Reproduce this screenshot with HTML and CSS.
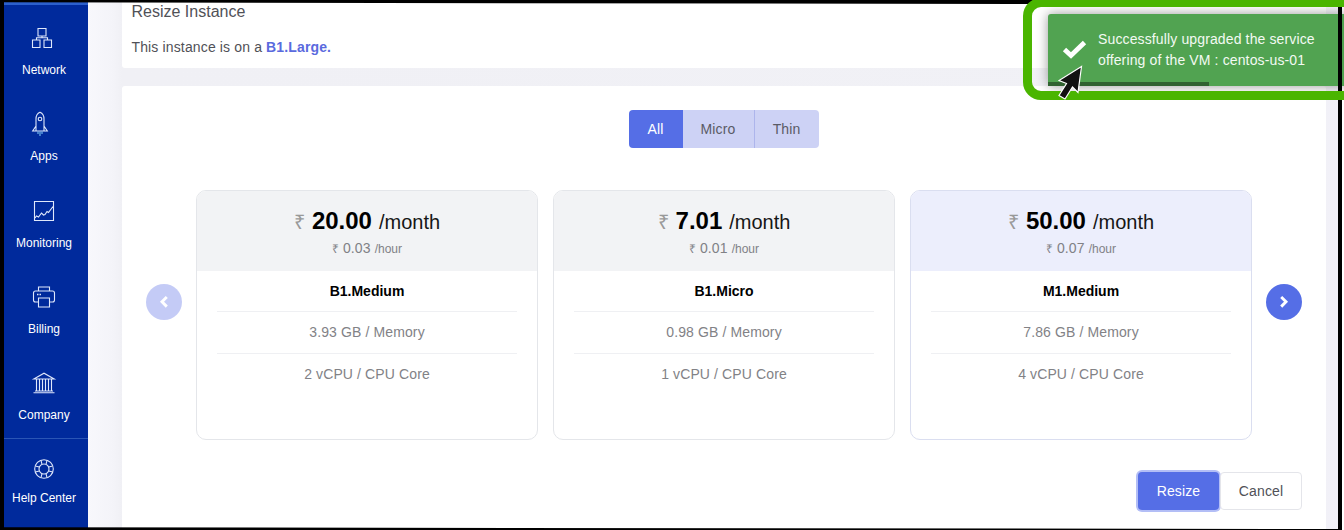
FILE: index.html
```html
<!DOCTYPE html>
<html lang="en">
<head>
<meta charset="utf-8">
<title>Resize Instance</title>
<link rel="stylesheet" href="styles.css">
</head>
<body>
<div class="app">
  <nav class="sidebar">
    <a class="nav-item">
      <svg class="icon icon-network" width="20" height="20" viewBox="0 0 20 20"><path d="M6 .5h8v7.500H6zM.5 12h7.500v7.500H.5zM12 12h7.500v7.500H12zM10 8v1.700M4.500 12V9.700h11V12"/></svg>
      <span>Network</span>
    </a>
    <a class="nav-item">
      <svg class="icon icon-rocket" width="16" height="25" viewBox="0 0 16 25"><path d="M4 19.500V7.500C4 4 6 1.500 8 .7c2 .8 4 3.300 4 6.800v12zM4 14.500L.7 19.500H4M12 14.500l3.300 5H12"/><circle cx="8" cy="7.500" r="1.800"/><path d="M6 20v2.500M8 20v4.500M10 20v2.500" stroke="#79c2f2"/></svg>
      <span>Apps</span>
    </a>
    <a class="nav-item">
      <svg class="icon" width="20" height="20" viewBox="0 0 20 20"><path d="M.5 .5h19v19H.5zM1 17l1.500-2 2 1 3-4 2 2 1.500-.5 2-3 1.500 1L19 5.500"/></svg>
      <span>Monitoring</span>
    </a>
    <a class="nav-item">
      <svg class="icon" width="22" height="21" viewBox="0 0 22 21"><path d="M5.500 4.500v-4h11v4M5.500 15.500h-3c-1.200 0-2-.8-2-2v-7c0-1.200.8-2 2-2h17c1.200 0 2 .8 2 2v7c0 1.200-.8 2-2 2h-3M5.500 11.500h11v9h-11z"/><path d="M4 8h1.500M6.500 8H8" stroke-width="1.500"/></svg>
      <span>Billing</span>
    </a>
    <a class="nav-item">
      <svg class="icon" width="22" height="21" viewBox="0 0 22 21"><path d="M.8 6.500L11 .7l10.200 5.800zM3.500 7v11.500M6.500 7v11.500M9.500 7v11.500M12.500 7v11.500M15.500 7v11.500M18.500 7v11.500M2 18.500h18M.5 20.300h21"/></svg>
      <span>Company</span>
    </a>
    <a class="nav-item nav-help">
      <svg class="icon" width="20" height="20" viewBox="0 0 20 20"><circle cx="10" cy="10" r="9.300"/><circle cx="10" cy="10" r="5"/><path d="M7 1.300l1 4M13 1.300l-1 4M7 18.700l1-4M13 18.700l-1-4M1.300 7l4 1M1.300 13l4-1M18.700 7l-4 1M18.700 13l-4-1"/></svg>
      <span>Help Center</span>
    </a>
  </nav>

  <main class="content">
    <section class="panel intro">
      <h1 class="title">Resize Instance</h1>
      <p class="current">This instance is on a <b>B1.Large.</b></p>
    </section>

    <section class="panel plans">
      <div class="tabs">
        <button class="tab tab-active">All</button>
        <button class="tab tab-micro">Micro</button>
        <button class="tab tab-thin">Thin</button>
      </div>

      <div class="carousel">
        <button class="arrow arrow-off" aria-label="Previous"><svg width="10" height="13" viewBox="0 0 10 13"><path d="M7.800 1L3 5.800 7.800 10.600"/></svg></button>
        <article class="card">
          <header class="card-head">
            <div class="month"><span class="cur">₹</span><b>20.00</b><span>/month</span></div>
            <div class="hour"><span class="cur-s">₹</span><span>0.03</span><small>/hour</small></div>
          </header>
          <ul class="specs"><li class="name">B1.Medium</li><li>3.93 GB / Memory</li><li>2 vCPU / CPU Core</li></ul>
        </article>
        <article class="card">
          <header class="card-head">
            <div class="month"><span class="cur">₹</span><b>7.01</b><span>/month</span></div>
            <div class="hour"><span class="cur-s">₹</span><span>0.01</span><small>/hour</small></div>
          </header>
          <ul class="specs"><li class="name">B1.Micro</li><li>0.98 GB / Memory</li><li>1 vCPU / CPU Core</li></ul>
        </article>
        <article class="card card-selected">
          <header class="card-head">
            <div class="month"><span class="cur">₹</span><b>50.00</b><span>/month</span></div>
            <div class="hour"><span class="cur-s">₹</span><span>0.07</span><small>/hour</small></div>
          </header>
          <ul class="specs"><li class="name">M1.Medium</li><li>7.86 GB / Memory</li><li>4 vCPU / CPU Core</li></ul>
        </article>
        <button class="arrow" aria-label="Next"><svg width="10" height="13" viewBox="0 0 10 13"><path d="M2.200 1L7 5.800 2.200 10.600"/></svg></button>
      </div>

      <div class="actions">
        <button class="btn btn-primary">Resize</button>
        <button class="btn btn-plain">Cancel</button>
      </div>
    </section>
  </main>

  <div class="toast">
    <svg class="check" width="25" height="20" viewBox="0 0 25 20"><path d="M2.500 9.500l6.500 6L22.500 2.500"/></svg>
    <p class="toast-text">Successfully upgraded the service<br>offering of the VM : centos-us-01</p>
    <div class="progress"></div>
  </div>

  <svg class="frame" width="1344" height="530" viewBox="0 0 1344 530">
    <path d="M0 0H1342V530H0zM4 2.300V527.200L1338 529V4.500z" fill-rule="evenodd"/>
  </svg>
  <div class="highlight"></div>
  <svg class="cursor" width="26" height="36" viewBox="0 0 26 36"><path d="M23.500 1.500L1 15.500l7.500 3-7.500 12 6 3.500 7.500-12 5.500 5.500z"/></svg>
</div>
</body>
</html>
```
FILE: styles.css
```css
* { box-sizing: border-box; }
body {
  margin: 0;
  overflow: hidden;
  background: #fff;
  color: #505157;
  font: 14px/20px "Liberation Sans", Arial, sans-serif;
  letter-spacing: .12px;
}
button { font: inherit; letter-spacing: inherit; border: 0; padding: 0; margin: 0; }
p, h1, ul { margin: 0; padding: 0; }

.app {
  position: relative;
  display: flex;
  width: 1344px;
  height: 530px;
  padding: 0 6px 0 4px;
  overflow: hidden;
}

.sidebar {
  width: 84px;
  flex: none;
  background: #002a9c;
  border-top: 5px solid #2c60cc;
  display: flex;
  flex-direction: column;
}
.nav-item {
  display: flex;
  flex-direction: column;
  align-items: center;
  height: 86.3px;
  flex: none;
  padding: 20px 4px 0 0;
  color: #fff;
  font-size: 12px;
  line-height: 14px;
  letter-spacing: 0;
}
.icon {
  height: 26px;
  flex: none;
  margin-bottom: 12px;
  fill: none;
  stroke: #dfe8fb;
  stroke-width: 1.100;
  overflow: visible;
}
.icon-network { margin-right: 4px; }
.icon-rocket { margin-right: 8px; }
.nav-help {
  border-top: 1px solid #2a55b5;
  padding-top: 17px;
  margin-top: 2px;
}
.nav-help .icon { margin-bottom: 9px; }

.content {
  flex: 1;
  background: linear-gradient(90deg, #f8f8fc 0, #f4f4f9 24px, #f0f0f5 34px, #f1f1f6 1210px, #f2f1f8 100%);
  padding-right: 12px;
  padding-left: 34px;
  display: flex;
  flex-direction: column;
  gap: 18px;
}
.panel { background: #fff; border-radius: 3px; }
.intro { height: 68px; flex: none; padding: 1px 9.500px; }
.title { font-size: 16px; font-weight: 400; line-height: 22px; letter-spacing: 0; }
.current { margin-top: 14px; letter-spacing: .14px; }
.current b { color: #5a6ade; }

.plans { flex: none; height: 444px; padding: 24px 24px 0; border-radius: 3px 3px 0 0; }
.tabs { display: flex; width: 190px; margin: 0 0 0 483px; border-radius: 4px; overflow: hidden; }
.tab { height: 38px; background: #cdd2f5; color: #5a5b66; padding-right: 1px; }
.tab-active { width: 54px; background: #556ee6; color: #fff; }
.tab-micro { width: 72px; border-right: 1px solid #adb5ec; }
.tab-thin { width: 64px; }

.carousel { display: flex; gap: 15px; margin-top: 42px; }
.arrow {
  width: 36px;
  height: 36px;
  margin-top: 94px;
  border-radius: 50%;
  background: #556ee6;
  display: flex;
  align-items: center;
  justify-content: center;
  flex: none;
}
.arrow svg { fill: none; stroke: #fff; stroke-width: 2.900; }
.arrow:last-child { margin-left: -1px; }
.arrow-off { background: #c4cbf6; margin-right: -1px; }
.card {
  width: 342px;
  height: 250px;
  flex: none;
  border: 1px solid #e4e6ea;
  border-radius: 10px;
  overflow: hidden;
}
.card-head { height: 80px; background: #f2f3f5; padding: 16px 0 0; }
.card-selected { border-color: #dadef0; }
.card-selected .card-head { background: #eceefc; }
.month {
  display: flex;
  justify-content: center;
  align-items: baseline;
  gap: 7px;
  color: #161616;
  font-size: 20px;
  line-height: 28px;
  letter-spacing: 0;
}
.month b { font-size: 24px; color: #000; }
.cur { color: #999; }
.hour {
  display: flex;
  justify-content: center;
  align-items: baseline;
  gap: 4px;
  color: #808186;
  line-height: 20px;
  margin-top: 2px;
}
.hour small, .cur-s { font-size: 12px; letter-spacing: 0; }
.specs { list-style: none; margin: 0 20px; text-align: center; color: #828286; }
.specs li { height: 42px; line-height: 41px; border-bottom: 1px solid #eff0f3; }
.specs li:last-child { border-bottom: 0; }
.specs .name { height: 41px; color: #000; font-weight: 700; letter-spacing: 0; }

.actions { display: flex; justify-content: flex-end; gap: 1px; margin-top: 32px; }
.btn { width: 82px; height: 38px; border-radius: 4px; }
.btn-primary { width: 81px; background: #556ee6; color: #fff; box-shadow: 0 0 0 2px #b3bef6; }
.btn-plain { background: #fff; color: #505157; border: 1px solid #e4e5ea; }

.toast {
  position: absolute;
  left: 1048px;
  top: 14px;
  width: 300px;
  height: 72px;
  display: flex;
  background: #51a351;
  border-radius: 3px;
  box-shadow: 0 0 12px #999;
  color: #f3faf3;
  padding: 15px 0 0 14px;
}
.check { margin: 11px 11px 0 0; fill: none; stroke: #fff; stroke-width: 4.800; }
.toast-text { line-height: 21px; white-space: nowrap; letter-spacing: .13px; }
.progress { position: absolute; left: 0; bottom: 0; width: 161px; height: 4px; background: #316231; }

.frame { position: absolute; left: 0; top: 0; fill: #000; }
.highlight {
  position: absolute;
  left: 1023px;
  top: -2px;
  width: 360px;
  height: 102px;
  border: 9px solid #4ab500;
  border-radius: 18px;
}
.cursor { position: absolute; left: 1058px; top: 65px; fill: #111; stroke: #fff; stroke-width: 1.200; }
```
